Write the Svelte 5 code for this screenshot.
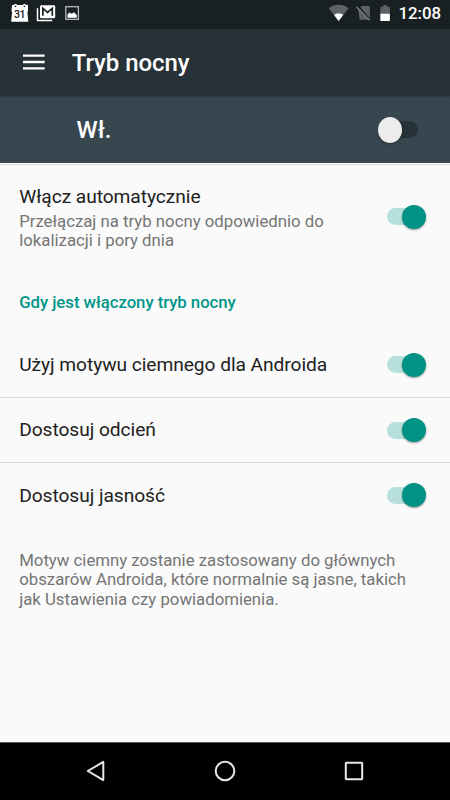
<script lang="ts">
  interface Setting {
    id: string;
    title: string;
    on: boolean;
  }

  let enabled = $state(false);
  let auto = $state(true);
  let settings: Setting[] = $state([
    { id: "theme", title: "Użyj motywu ciemnego dla Androida", on: true },
    { id: "tint", title: "Dostosuj odcień", on: true },
    { id: "brightness", title: "Dostosuj jasność", on: true },
  ]);
</script>

{#snippet toggle(on: boolean, label: string, onToggle: () => void)}
  <button class="switch" class:on role="switch" aria-checked={on} aria-label={label} onclick={onToggle}>
    <span class="thumb"></span>
  </button>
{/snippet}

<div class="screen">
  <div class="status">
    <svg class="notifications" width="80" height="28" viewBox="0 0 80 28">
      <path fill="#fff" d="M12 5h2.3V4h2.4v1h6.5V4h2.4v1H28v6l-.6 1 .9 9.7H11.2l.9-9.7-.6-1z" />
      <circle cx="15.5" cy="6.4" r=".8" fill="#192022" />
      <circle cx="24.3" cy="6.4" r=".8" fill="#192022" />
      <text x="19.5" y="18.4" text-anchor="middle">31</text>
      <path fill="none" stroke="#fff" stroke-width="1.5" d="M37.5 8.3v12.2h14.7" />
      <rect x="40" y="5.2" width="15.2" height="13" rx="1.3" fill="#fff" />
      <path fill="none" stroke="#192022" stroke-width="1.7" d="M42.9 15.8V8.4l4.700 3.900 4.700-3.900v7.400" />
      <rect x="65.8" y="6.7" width="12.6" height="12.6" fill="#192022" stroke="#b5b9ba" stroke-width="1.3" />
      <path fill="#fff" d="M67.5 17.8v-3.600l2.200-1.700 2 1.300 2.200-1.500 2.900 2.600v2.900z" />
    </svg>
    <div class="system">
      <svg width="64" height="28" viewBox="0 0 64 28">
        <path fill="#5d6364" d="M.7 8.300C6.400 3.700 14.900 3.700 20.600 8.300L10.600 21z" />
        <path fill="#fff" d="M6 15c2.600-1.900 6.600-1.900 9.200 0l-4.600 6z" />
        <path fill="#5d6364" d="M33.700 6h7q1.200 0 1.200 1.200v12.600H31.800L30.100 9.600z" />
        <path stroke="#192022" stroke-width="2.200" d="m29.500 5.800 13.500 15.400" />
        <path stroke="#7a8081" stroke-width="1.300" d="m28.400 6.800 13.200 13.400" />
        <path fill="#5d6364" d="M55 5.200h4.200v1.700h2.700V14H52.300V6.900H55z" />
        <path fill="#fff" d="M52.300 13.700h9.600v6.600q0 .7-.7.7H53q-.7 0-.7-.7z" />
      </svg>
      <span class="clock">12:08</span>
    </div>
  </div>

  <header class="toolbar">
    <svg width="22" height="18" viewBox="0 0 22 18" aria-hidden="true">
      <path stroke="#fff" stroke-width="2.3" d="M0 2.600h21.600M0 9h21.600M0 15.400h21.600" />
    </svg>
    <h1>Tryb nocny</h1>
  </header>

  <div class="master">
    <span>Wł.</span>
    {@render toggle(enabled, "Tryb nocny", () => (enabled = !enabled))}
  </div>

  <main>
    <div class="row auto">
      <div class="text">
        <div class="title">Włącz automatycznie</div>
        <p>Przełączaj na tryb nocny odpowiednio do lokalizacji i pory dnia</p>
      </div>
      {@render toggle(auto, "Włącz automatycznie", () => (auto = !auto))}
    </div>

    <h2>Gdy jest włączony tryb nocny</h2>

    {#each settings as s (s.id)}
      <div class="row item">
        <div class="title">{s.title}</div>
        {@render toggle(s.on, s.title, () => (s.on = !s.on))}
      </div>
    {/each}

    <p class="note">
      Motyw ciemny zostanie zastosowany do głównych obszarów Androida, które normalnie są jasne, takich jak Ustawienia czy powiadomienia.
    </p>
  </main>

  <nav>
    <svg width="24" height="24" viewBox="0 0 24 24">
      <path d="M3.800 12 19.300 2.900v18.200z" />
    </svg>
    <svg width="24" height="24" viewBox="0 0 24 24">
      <circle cx="12" cy="12" r="9.3" />
    </svg>
    <svg width="24" height="24" viewBox="0 0 24 24">
      <rect x="3.8" y="3.8" width="16.4" height="16.4" rx=".6" />
    </svg>
  </nav>
</div>

<style>
  :global(body) { margin: 0; }
  .screen {
    display: flex;
    flex-direction: column;
    width: 450px;
    height: 800px;
    overflow: hidden;
    background: #fafafa;
    font-family: Roboto, "Noto Sans", sans-serif;
    color: #212121;
  }
  h1, h2, p { margin: 0; }
  svg { display: block; flex: none; }

  .status {
    display: flex;
    justify-content: space-between;
    height: 28.8px;
    flex: none;
    background: #192022;
  }
  .notifications text { font-size: 10.5px; font-weight: 500; letter-spacing: -0.4px; fill: #192022; }
  .system { display: flex; padding-right: 9px; }
  .clock {
    margin-left: 6px;
    color: #fff;
    font-size: 16.8px;
    font-weight: 500;
    line-height: 26px;
  }

  .toolbar {
    display: flex;
    align-items: center;
    gap: 26.7px;
    height: 67.2px;
    flex: none;
    padding-left: 23px;
    background: #263238;
  }
  h1 {
    padding-top: 2px;
    color: #fff;
    font-size: 24px;
    font-weight: 500;
    line-height: 28px;
    letter-spacing: -0.05px;
  }

  .master {
    display: flex;
    align-items: center;
    justify-content: space-between;
    box-sizing: border-box;
    height: 67px;
    flex: none;
    padding: 0 24px 0 76.6px;
    background: #37474f;
    box-shadow: inset 0 2px 2px -1px rgba(0, 0, 0, 0.2), 0 1px 0 #fff, 0 2px 1px #dedede;
    color: #fff;
    font-size: 24px;
    font-weight: 500;
  }
  .master span { padding-top: 2px; }

  .switch {
    display: flex;
    align-items: center;
    width: 48px;
    height: 24px;
    flex: none;
    padding: 0;
    border: 0;
    background: none;
    position: relative;
    cursor: pointer;
  }
  .switch::before {
    content: "";
    width: 35px;
    height: 17px;
    margin-left: 4.5px;
    border-radius: 9px;
    background: #263238;
  }
  .thumb {
    position: absolute;
    left: 0;
    top: 0;
    width: 24px;
    height: 24px;
    border-radius: 50%;
    background: #ececec;
    box-shadow: 0 1px 2px rgba(0, 0, 0, 0.4);
  }
  .switch.on::before { margin-left: 8.7px; background: #b7e0dc; }
  .switch.on .thumb { left: 24px; background: #009284; }

  main { flex: 1; }
  .row {
    display: flex;
    align-items: center;
    justify-content: space-between;
    box-sizing: border-box;
    padding: 0 24px 0 19.2px;
  }
  .auto { height: 108px; }
  .text { width: 320px; padding-top: 3px; }
  .title { font-size: 19.2px; line-height: 22.5px; letter-spacing: -0.06px; }
  .text .title { margin-bottom: 3.3px; }
  p { color: #757575; font-size: 16.8px; line-height: 19.7px; letter-spacing: -0.01px; }
  h2 {
    height: 61px;
    padding-left: 19.2px;
    color: #009688;
    font-size: 16.8px;
    font-weight: 500;
    line-height: 63px;
    letter-spacing: -0.06px;
  }
  .item { height: 65.2px; }
  .item .title { padding-top: 0.6px; }
  .item + .item { border-top: 1px solid #dadada; }
  .note { padding: 23px 40px 0 19.2px; }

  nav {
    display: flex;
    align-items: center;
    justify-content: space-between;
    box-sizing: border-box;
    height: 58px;
    flex: none;
    padding: 0 84px 1px;
    border-top: 1px solid #555;
    background: #000;
  }
  nav svg { fill: none; stroke: #e8e8e8; stroke-width: 2; stroke-linejoin: round; }
</style>
